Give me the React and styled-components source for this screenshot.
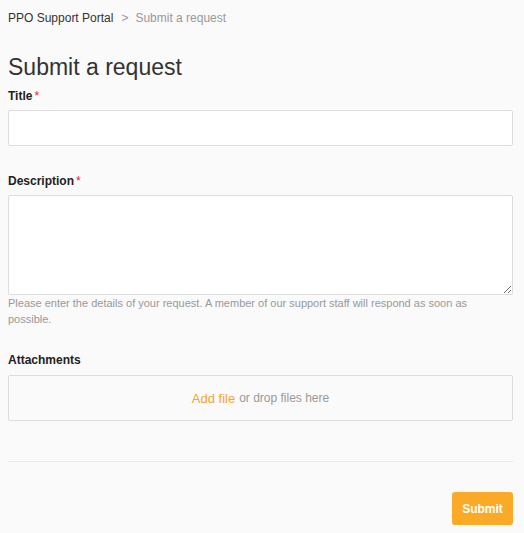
import React from 'react';
import styled, { createGlobalStyle } from 'styled-components';

const GlobalStyle = createGlobalStyle`
  html, body {
    margin: 0;
    padding: 0;
    background: #fafafa;
  }
  body {
    font-family: "Liberation Sans", Arial, sans-serif;
    color: #333;
  }
  * { box-sizing: border-box; }
`;

const Page = styled.div`
  padding: 9px 11px 8px 8px;
  display: flex;
  flex-direction: column;
`;

const Breadcrumbs = styled.nav`
  display: flex;
  align-items: center;
  font-size: 12px;
  line-height: 18px;
  color: #333;
`;

const Crumb = styled.span`
  color: ${p => (p.$current ? '#999' : '#333')};
`;

const Sep = styled.span`
  color: #999;
  margin: 0 7px 0 8px;
`;

const Heading = styled.h1`
  margin: 25px 0 0;
  font-size: 23px;
  line-height: 30px;
  font-weight: 400;
  color: #333;
`;

const Field = styled.div`
  display: flex;
  flex-direction: column;
  margin-top: ${p => p.$top || 0}px;
`;

const Label = styled.label`
  font-size: 12px;
  line-height: 18px;
  font-weight: 700;
  color: #222;
  margin-bottom: ${p => p.$gap || 5}px;
`;

const Required = styled.span`
  color: #e5252a;
  font-weight: 400;
  margin-left: 2px;
`;

const Input = styled.input`
  display: block;
  width: 100%;
  height: 36px;
  margin: 0;
  border: 1px solid #ddd;
  border-radius: 2px;
  background: #fff;
  font: inherit;
  padding: 0 10px;
  outline: none;
`;

const TextArea = styled.textarea`
  display: block;
  width: 100%;
  height: 100px;
  margin: 0;
  border: 1px solid #ddd;
  border-radius: 2px;
  background: #fff;
  font: inherit;
  padding: 8px 10px;
  outline: none;
  resize: vertical;
`;

const Hint = styled.p`
  margin: 0;
  font-size: 11px;
  line-height: 16px;
  color: #999;
`;

const DropZone = styled.div`
  height: 46px;
  display: flex;
  align-items: center;
  justify-content: center;
  gap: 4px;
  border: 1px solid #ddd;
  border-radius: 2px;
  font-size: 12px;
  color: #999;
`;

const AddLink = styled.a`
  color: #f8a22c;
  font-size: 13px;
  text-decoration: none;
  cursor: pointer;
`;

const Divider = styled.hr`
  margin: 40px 0 0;
  border: 0;
  border-top: 1px solid #ebebeb;
  height: 0;
`;

const Footer = styled.div`
  display: flex;
  justify-content: flex-end;
  margin-top: 30px;
`;

const SubmitButton = styled.button`
  height: 33px;
  padding: 0 10px;
  width: 61px;
  border: 0;
  border-radius: 3px;
  background: #fbaa27;
  color: #fff;
  font-family: inherit;
  font-size: 12px;
  font-weight: 700;
  cursor: pointer;
`;

export default function App() {
  return (
    <>
      <GlobalStyle />
      <Page>
        <Breadcrumbs>
          <Crumb>PPO Support Portal</Crumb>
          <Sep>&gt;</Sep>
          <Crumb $current>Submit a request</Crumb>
        </Breadcrumbs>

        <Heading>Submit a request</Heading>

        <Field $top={5}>
          <Label htmlFor="title">Title<Required>*</Required></Label>
          <Input id="title" type="text" />
        </Field>

        <Field $top={26}>
          <Label htmlFor="desc">Description<Required>*</Required></Label>
          <TextArea id="desc" />
          <Hint>
            Please enter the details of your request. A member of our support staff will respond as soon as possible.
          </Hint>
        </Field>

        <Field $top={24}>
          <Label $gap={6}>Attachments</Label>
          <DropZone>
            <AddLink>Add file</AddLink>
            <span>or drop files here</span>
          </DropZone>
        </Field>

        <Divider />

        <Footer>
          <SubmitButton>Submit</SubmitButton>
        </Footer>
      </Page>
    </>
  );
}
